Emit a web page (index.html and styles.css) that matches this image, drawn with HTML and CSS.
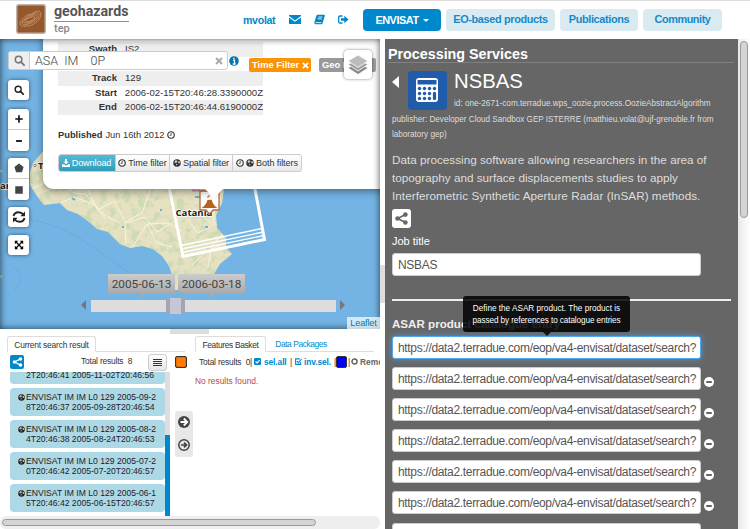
FILE: index.html
```html
<!DOCTYPE html>
<html lang="en">
<head>
<meta charset="utf-8">
<title>Geohazards TEP</title>
<link rel="stylesheet" href="styles.css">
</head>
<body>
<svg class="defs" aria-hidden="true">
  <symbol id="search" viewBox="0 0 12 12"><circle cx="5" cy="5" r="3.6" fill="none" stroke="currentColor" stroke-width="1.7"/><path d="M7.7 7.7L11 11" stroke="currentColor" stroke-width="2" stroke-linecap="round"/></symbol>
  <symbol id="clock" viewBox="0 0 12 12"><circle cx="6" cy="6" r="4.9" fill="none" stroke="currentColor" stroke-width="1.7"/><path d="M6.3 3v3.5H4" fill="none" stroke="currentColor" stroke-width="1.2"/></symbol>
  <symbol id="globe" viewBox="0 0 12 12"><circle cx="6" cy="6" r="5.6" fill="currentColor"/><path d="M3.600 2l2.300.3 1 1.500-1.500 1.300-2 1-1.200-1.300zM8 3.200l2 .2.800 2.200-1.300 1.200-1.700-.9zM4.800 7l1.800.6-.7 2.300-1.300-.8z" fill="#fff" opacity=".75"/></symbol>
  <symbol id="share" viewBox="0 0 12 12"><path d="M9.7 2.3L2.5 6l7.2 3.7" fill="none" stroke="currentColor" stroke-width="1.5"/><g fill="currentColor"><circle cx="9.6" cy="2.4" r="2.1"/><circle cx="2.3" cy="6" r="2.1"/><circle cx="9.6" cy="9.6" r="2.1"/></g></symbol>
  <symbol id="minus" viewBox="0 0 10 10"><circle cx="5" cy="5" r="5" fill="#fff"/><path d="M2.2 5h5.6" stroke="#555" stroke-width="1.8"/></symbol>
</svg>
<header class="top">
  <div class="brand">
    <svg class="logo" viewBox="0 0 29 29"><rect x=".7" y=".7" width="27.6" height="27.6" rx="2" fill="#95582c" stroke="#b9b4ae" stroke-width="1.4"/><g fill="none" stroke="#d6ae8e" stroke-width=".6"><path d="M4 18c-1 4 4 4 9 3s11-6 11-11-5-3-8-1-4 0-7 3-4 3-5 6z"/><path d="M6 18c0 3 4 2 7 1s9-4 9-8-4-2-6-1-5 1-6 3-4 3-4 5z"/><path d="M8 18c2 2 12-3 12-6s-4-1-6 0-8 4-6 6z"/><path d="M10 17c2 1 8-2 8-4s-3 0-4 0-5 2-4 4z"/></g></svg>
    <div class="brand-text"><b class="name">geohazards</b><span class="sub">tep</span></div>
  </div>
  <nav class="user">
    <a class="uname">mvolat</a>
    <svg class="ic mail" viewBox="0 0 12 9"><path d="M0 0h12v1L6 5.5 0 1zM0 2.5l6 4.3 6-4.3V9H0z"/></svg>
    <svg class="ic book" viewBox="0 0 11 11"><path d="M3.5.8h6.8q.7.2.5 1L8.7 9q-.3 1.2-1.3 1.2H1.5Q0 10 .3 8.6L2.4 1.8Q2.7.8 3.5.8z"/><path d="M4.3 3h4M3.7 4.800h4M1.600 8.600h5.800" stroke="#fff" stroke-width=".8"/></svg>
    <svg class="ic out" viewBox="0 0 11 9"><path d="M4.5 1H2Q.7 1 .7 2.300v4.400Q.7 8 2 8h2.500" fill="none" stroke="#08c" stroke-width="1.300"/><path d="M3 3.200h3.300V.8L10.500 4.500 6.300 8.200V5.800H3z"/></svg>
  </nav>
  <nav class="menu">
    <a class="pill on">ENVISAT <i class="caret"></i></a>
    <a class="pill eo">EO-based products</a>
    <a class="pill pub">Publications</a>
    <a class="pill com">Community</a>
  </nav>
</header>
<main class="main">
  <div class="left">
    <section class="map">
      <svg class="tiles" viewBox="0 39 380 290">
        <defs>
        <filter id="terrain" x="0" y="0" width="1" height="1"><feTurbulence type="fractalNoise" baseFrequency=".13" numOctaves="3" seed="8"/><feColorMatrix values="0 0 0 0 .62  0 0 0 0 .7  0 0 0 0 .46  0 5 0 0 -2.4"/></filter>
        <clipPath id="land"><path d="M44 150L33 163L30 172V185L37 196L44 205L60 203L67 210L78 214L88 221L97 229L108 232L120 244L130 248L142 246L153 249L162 256L169 266L173 278L175 290H213L214 274L220 264L226 259L232 254L226 248V238L217 228L216 215L222 203L224 190V150z"/></clipPath></defs>
        <rect y="39" width="380" height="290" fill="#73b4e5"/>
        <path d="M30 219q35 8 60 26t40 28M10 265q20 10 3 27" fill="none" stroke="#68a7da" stroke-width=".8"/>
        <g clip-path="url(#land)"><rect x="20" y="150" width="220" height="140" fill="#e5e1c1"/><rect x="20" y="150" width="220" height="140" filter="url(#terrain)"/>
        <g fill="none" stroke="#f8f3dc" stroke-width="1"><path d="M31 190l15-8 12-3 16 14 11 1 20 21 14 8M60 203l14-6 19 7 13 15M88 190l10 20 16-9 12 22 19-6 12 15 23-14M126 243l-1-21 17-9 8-23M132 248l15-24 10 19 15 4M148 224l20-1 14 8M195 210l20 16M188 220l10 13 13-7M216 201l-3 20 11 12-12 12-4 22M192 265l13-13 14-6"/></g>
        <path d="M72 198l3 2M122 227h2M160 210h2M205 227h3M195 197h5" stroke="#65aee5" stroke-width="2"/><path d="M192 190.500h8" stroke="#d98fb5" stroke-width="2"/></g>
        <path d="M0 170l2 2M0 277l2-1" stroke="#ddd6ad" stroke-width="2"/>
        <text class="place" x="0" y="189">ar</text><text class="place" x="38" y="168.5">T</text><circle cx="35" cy="165.500" r="1.200" fill="#fff" stroke="#555" stroke-width=".7"/>
        <text class="place" x="175.500" y="215.500">Catania</text>
        <g fill="none" stroke="#fff"><path d="M168.500 184l14.500 72.500 81.500-17L254 184" stroke-width="3"/><path d="M181 245.500l81-17M181.500 249l82-17M182 252.500l82-17" stroke-width="1.300"/></g>
        <path d="M200 191h19v19h-6l-3.500 4-3.500-4h-6z" fill="#fff" stroke="#b96e39" stroke-width="1.300"/><path d="M201.500 208q4-2 6-8l4-.3q2 6 6 8.300z" fill="#b9601f"/><path d="M208 198q-1-3 2-2" stroke="#b9601f" fill="none"/>
      </svg>
      <div class="popup">
        <dl class="rows">
          <div class="row shade"><dt>Swath</dt><dd>IS2</dd></div>
          <div class="row"><dt></dt><dd></dd></div>
          <div class="row shade"><dt>Track</dt><dd>129</dd></div>
          <div class="row"><dt>Start</dt><dd>2006-02-15T20:46:28.3390000Z</dd></div>
          <div class="row shade"><dt>End</dt><dd>2006-02-15T20:46:44.6190000Z</dd></div>
        </dl>
        <p class="published"><b>Published</b> Jun 16th 2012 <svg class="i8"><use href="#clock"/></svg></p>
        <div class="btns">
          <span class="btn dl"><svg class="i8" viewBox="0 0 12 12"><path d="M4.500 0h3v4H10L6 8 2 4h2.500zM0 8h3l3 2 3-2h3v4H0z" fill="#fff"/></svg>Download</span>
          <span class="btn tf"><svg class="i8"><use href="#clock"/></svg>Time filter</span>
          <span class="btn sf"><svg class="i8"><use href="#globe"/></svg>Spatial filter</span>
          <span class="btn bf"><svg class="i8"><use href="#clock"/></svg><svg class="i8"><use href="#globe"/></svg>Both filters</span>
        </div>
      </div>
      <i class="tip"></i>
      <i class="inner-shadow"></i>
      <div class="searchbar"><span class="sicon"><svg><use href="#search"/></svg></span><span class="query">ASA&nbsp; IM&nbsp;&nbsp; &nbsp;0P</span><svg class="clear" viewBox="0 0 8 8"><path d="M1 1l6 6M7 1L1 7" stroke="#aaa" stroke-width="2"/></svg></div>
      <svg class="info" viewBox="0 0 10 10"><circle cx="5" cy="5" r="4.800" fill="#0876ae"/><path d="M4 4.200h1.500V8M3.700 8h3M4.300 2.300h1.300" stroke="#fff" stroke-width="1.300" fill="none"/></svg>
      <span class="tag time">Time Filter <svg viewBox="0 0 8 8"><path d="M1 1l6 6M7 1L1 7" stroke="#fff" stroke-width="2.200"/></svg></span>
      <span class="tag geo">Geo Filter</span>
      <div class="layers"><svg viewBox="0 0 22 22"><g stroke="#fff" stroke-width=".8"><path d="M11 8l10 6-10 6.500L1 14z" fill="#888"/><path d="M11 5l10 5.500-10 6.500-10-6.500z" fill="#a0a0a0"/><path d="M11 1l10 6-10 6.500L1 7z" fill="#bcbcbc"/></g></svg></div>
      <div class="tools">
        <span class="tool"><svg><use href="#search"/></svg></span>
        <span class="tool pair"><i><svg viewBox="0 0 12 12"><path d="M6 1.500v9M1.500 6h9" stroke="#111" stroke-width="2"/></svg></i><i><svg viewBox="0 0 12 12"><path d="M2.500 6h7" stroke="#111" stroke-width="2.200"/></svg></i></span>
        <span class="tool pair shapes"><i><svg viewBox="0 0 12 12"><path d="M6 .5l5.500 4.300L9.500 11h-7L.5 4.800z" fill="#444"/></svg></i><i><svg viewBox="0 0 12 12"><path d="M1.500 1.500h9v9h-9z" fill="#444"/></svg></i></span>
        <span class="tool refresh"><svg viewBox="0 0 14 12"><path d="M1.500 5q1-3.800 5-3.800 3 0 4.800 2.300M12.500 7q-1 3.800-5 3.800-3 0-4.800-2.300" fill="none" stroke="#222" stroke-width="1.900"/><path d="M13 .5v4.700H8.300zM1 11.500V6.800h4.700z" fill="#222"/></svg></span>
        <span class="tool full"><svg viewBox="0 0 12 12"><path d="M2.500 2.500l7 7M9.500 2.500l-7 7" stroke="#111" stroke-width="1.600"/><path d="M1 1h4L1 5zM11 1v4L7 1zM1 11V7l4 4zM11 11H7l4-4z"/></svg></span>
      </div>
      <span class="date d1">2005-06-13</span><span class="date d2">2006-03-18</span>
      <div class="slider"><i class="range"></i></div><i class="arr l"></i><i class="arr r"></i>
      <span class="leaflet">Leaflet</span>
    </section>
    <div class="split-h"><i></i></div>
    <section class="bottom">
      <div class="results">
        <div class="tabs"><span class="tab active cur">Current search result</span></div>
        <div class="bar"><span class="share"><svg><use href="#share"/></svg></span><span class="total">Total results&nbsp; 8</span><span class="listbtn"><i></i><i></i><i></i><i></i></span></div>
        <div class="listwrap">
          <div class="list">
            <div class="item first"><p><br>2T20:46:41 2005-11-02T20:46:56</p></div>
            <div class="item"><svg class="g"><use href="#globe"/></svg><p>ENVISAT IM IM L0 129 2005-09-2<br>8T20:46:37 2005-09-28T20:46:54</p></div>
            <div class="item"><svg class="g"><use href="#globe"/></svg><p>ENVISAT IM IM L0 129 2005-08-2<br>4T20:46:38 2005-08-24T20:46:53</p></div>
            <div class="item"><svg class="g"><use href="#globe"/></svg><p>ENVISAT IM IM L0 129 2005-07-2<br>0T20:46:42 2005-07-20T20:46:57</p></div>
            <div class="item"><svg class="g"><use href="#globe"/></svg><p>ENVISAT IM IM L0 129 2005-06-1<br>5T20:46:42 2005-06-15T20:46:57</p></div>
          </div>
          <div class="vbar"><i></i></div>
        </div>
      </div>
      <div class="mid"><i class="sw orange"></i>
        <div class="movers"><svg viewBox="0 0 12 12"><circle cx="6" cy="6" r="6" fill="#444"/><path d="M2.500 6h6M5.800 2.500L9.300 6 5.800 9.500" stroke="#fff" stroke-width="1.800" fill="none"/></svg><svg viewBox="0 0 12 12"><circle cx="6" cy="6" r="5.200" fill="none" stroke="#444" stroke-width="1.500"/><path d="M3 6h5M6 3.600L8.500 6 6 8.400" stroke="#444" stroke-width="1.700" fill="none"/></svg></div>
      </div>
      <div class="basket">
        <div class="tabs"><span class="tab active fb">Features Basket</span><span class="tab dp">Data Packages</span></div>
        <div class="bline"><span class="t0">Total results&nbsp; 0|</span><svg class="chk" viewBox="0 0 8 8"><rect width="8" height="8" rx="1.500" fill="#08c"/><path d="M1.800 4l1.700 1.700L6.500 2.500" fill="none" stroke="#fff" stroke-width="1.300"/></svg><b class="sel">sel.all</b><span class="pipe">|</span><svg class="chk" viewBox="0 0 8 8"><path d="M6.500 4.500V7.300H.7V1h4.800M2 3.500l1.800 1.800L7.500 1.200" fill="none" stroke="#08c" stroke-width="1.200"/></svg><b class="inv">inv.sel.</b><span class="pipe p3">|</span><i class="sw blue"></i><span class="pipe p4">|</span><svg class="chk" viewBox="0 0 8 8"><circle cx="4" cy="4" r="2.900" fill="none" stroke="#666" stroke-width="1.700"/></svg><b class="rem">Remove</b></div>
        <p class="none">No results found.</p>
      </div>
      <div class="hscroll"><i></i></div>
    </section>
  </div>
  <div class="split-v"><i></i></div>
  <section class="panel">
    <h1>Processing Services</h1>
    <div class="svc">
      <i class="back"></i>
      <svg class="calc" viewBox="0 0 39 39"><rect width="39" height="39" rx="4" fill="#205caa"/><path d="M8 10q0-3 3-3h16q3 0 3 3v18q0 3-3 3H11q-3 0-3-3z" fill="#fff"/><path d="M9.500 9h19v4.500h-19z" fill="#205caa"/><g fill="#205caa"><circle cx="11.500" cy="17.500" r="1.700"/><circle cx="16.500" cy="17.500" r="1.700"/><circle cx="21.500" cy="17.500" r="1.700"/><circle cx="26.500" cy="17.500" r="1.700"/><circle cx="11.500" cy="22.500" r="1.700"/><circle cx="16.500" cy="22.500" r="1.700"/><circle cx="21.500" cy="22.500" r="1.700"/><circle cx="11.500" cy="27.500" r="1.700"/><circle cx="16.500" cy="27.500" r="1.700"/><circle cx="21.500" cy="27.500" r="1.700"/><rect x="24.900" y="20.800" width="3.200" height="8.400" rx="1.600"/></g></svg>
      <div class="svc-t"><h2>NSBAS</h2><p class="id">id: one-2671-com.terradue.wps_oozie.process.OozieAbstractAlgorithm</p></div>
    </div>
    <p class="pubr">publisher: Developer Cloud Sandbox GEP ISTERRE (matthieu.volat@ujf-grenoble.fr from<br><span>laboratory gep)</span></p>
    <p class="desc"><span>Data processing software allowing researchers in the area of</span><span>topography and surface displacements studies to apply</span><span class="l3">Interferometric Synthetic Aperture Radar (InSAR) methods.</span></p>
    <span class="share w"><svg><use href="#share"/></svg></span>
    <label class="job">Job title</label>
    <div class="input nsbas">NSBAS</div>
    <hr>
    <label class="asar">ASAR product catalogue entry</label>
    <div class="entries">
      <div class="entry"><div class="input focus">https://data2.terradue.com/eop/va4-envisat/dataset/search?</div></div>
      <div class="entry"><div class="input">https://data2.terradue.com/eop/va4-envisat/dataset/search?</div><svg><use href="#minus"/></svg></div>
      <div class="entry"><div class="input">https://data2.terradue.com/eop/va4-envisat/dataset/search?</div><svg><use href="#minus"/></svg></div>
      <div class="entry"><div class="input">https://data2.terradue.com/eop/va4-envisat/dataset/search?</div><svg><use href="#minus"/></svg></div>
      <div class="entry"><div class="input">https://data2.terradue.com/eop/va4-envisat/dataset/search?</div><svg><use href="#minus"/></svg></div>
      <div class="entry"><div class="input">https://data2.terradue.com/eop/va4-envisat/dataset/search?</div><svg><use href="#minus"/></svg></div>
      <div class="entry"><div class="input"></div></div>
    </div>
    <div class="tooltip"><span>Define the ASAR product. The product is</span><span class="tt2">passed by references to catalogue entries</span></div>
  </section>
  <div class="scroll"><i></i></div>
</main>
</body>
</html>
```
FILE: styles.css
```css
* { box-sizing: border-box; }
body { margin: 0; width: 750px; height: 529px; overflow: hidden; background: #fff; color: #333; font: 9.6px/14px "Liberation Sans", Arial, sans-serif; display: flex; flex-direction: column; }
p, h1, h2, dl, dd { margin: 0; }
i { font-style: normal; display: block; }
svg { display: block; flex: none; }
.defs { position: absolute; width: 0; height: 0; }

.top { height: 39px; flex: none; border-top: 1px solid #ddd; display: flex; align-items: flex-start; }
.brand { display: flex; width: 243px; padding: 3px 0 0 16px; gap: 8px; }
.logo { width: 30px; height: 30px; }
.brand-text { width: 75px; }
.name { display: block; height: 18px; border-bottom: 1px solid #b98260; font: bold 14.2px/14px Roboto, sans-serif; color: #555; white-space: nowrap; }
.sub { display: block; font: 500 11px/13px Roboto, sans-serif; color: #888; }
.user { display: flex; align-items: center; width: 120px; height: 37px; }
.uname { font-weight: bold; font-size: 10.6px; letter-spacing: -.3px; color: #08c; width: 46px; }
.ic { fill: #08c; }
.mail { width: 12px; height: 9px; margin-right: 13px; }
.book { width: 11px; height: 11px; margin-right: 13px; }
.out { width: 11px; height: 9px; }
.menu { display: flex; padding-top: 8px; gap: 5px; }
.pill { height: 22px; border-radius: 4px; background: #d9eaf1; color: #1789c9; font: bold 10.9px/21px "Liberation Sans", sans-serif; letter-spacing: -.35px; text-align: center; white-space: nowrap; }
.on { width: 78px; background: #08c; color: #fff; display: flex; align-items: center; justify-content: center; gap: 4px; letter-spacing: -.45px; }
.caret { border: 3px solid transparent; border-top-color: #fff; border-bottom: 0; }
.eo { width: 109px; } .pub { width: 78px; } .com { width: 79px; letter-spacing: -.45px; }

.main { flex: 1; display: flex; min-height: 0; }
.left { width: 380px; display: flex; flex-direction: column; }
.map { height: 290px; position: relative; overflow: hidden; flex: none; }
.tiles { width: 380px; height: 290px; }
.place { font: bold 9.6px "Open Sans", sans-serif; fill: #222; stroke: #fff; stroke-width: 1.5px; paint-order: stroke; }
.popup { position: absolute; left: 43px; top: -20px; width: 345px; height: 170px; padding: 23px 0 0 15px; background: #fff; border-radius: 0 0 0 11px; box-shadow: 0 2px 9px rgba(0,0,0,.45); }
.rows { width: 205px; }
.row { display: flex; height: 14.600px; line-height: 14.600px; }
.row:first-child { line-height: 13px; }
.shade { background: #eee; }
.row dt { width: 59px; text-align: right; font-weight: bold; }
.row dd { margin-left: 8px; white-space: nowrap; }
.published { display: flex; gap: 3px; align-items: center; margin-top: 13px; height: 14px; font-size: 9.300px; }
.i8 { width: 8px; height: 8px; }
.btns { display: flex; margin-top: 12px; height: 18px; width: 244px; border: 1px solid #ccc; border-radius: 3px; background: linear-gradient(#fff, #e8e8e8); overflow: hidden; }
.btn { display: flex; align-items: center; justify-content: center; gap: 2px; border-right: 1px solid #ccc; font-size: 9.100px; letter-spacing: -.1px; white-space: nowrap; }
.dl { width: 58px; margin: -1px 0 -1px -1px; background: linear-gradient(#55bcd8, #2f9ab9); color: #fff; }
.tf { width: 54px; } .sf { width: 63px; } .bf { flex: 1; border: 0; }
.tip { position: absolute; left: 204px; top: 149px; border: 10px solid transparent; border-top-color: #fff; border-bottom: 0; }
.searchbar { position: absolute; left: 8px; top: 12px; width: 220px; height: 19px; border: 1px solid #ccc; border-radius: 3px; background: #fff; display: flex; align-items: center; }
.sicon { width: 21px; height: 17px; background: #eee; border-right: 1px solid #ccc; color: #777; display: grid; place-items: center; }
.sicon svg { width: 11px; height: 11px; }
.query { flex: 1; padding-left: 5px; font: 300 12.500px/17px Roboto, sans-serif; color: #444; white-space: nowrap; }
.clear { width: 8px; height: 8px; margin-right: 4px; }
.info { position: absolute; left: 229px; top: 17px; width: 10px; height: 10px; }
.tag { position: absolute; top: 19px; height: 14px; border-radius: 2px; color: #fff; font-weight: bold; font-size: 9.400px; line-height: 14px; padding-left: 3px; white-space: nowrap; display: flex; align-items: center; gap: 3px; }
.tag svg { width: 7px; height: 7px; }
.time { left: 249px; width: 62px; background: #f89406; }
.geo { left: 319px; width: 57px; background: #999; }
.layers { position: absolute; left: 344px; top: 11px; width: 28px; height: 29px; border-radius: 4px; background: #fff; box-shadow: 0 0 3px rgba(0,0,0,.5); padding: 4px 3px; }
.layers svg { width: 22px; height: 22px; }
.tools { position: absolute; left: 8px; top: 41px; display: flex; flex-direction: column; gap: 8px; }
.tool { width: 21px; height: 20px; border-radius: 3px; background: #fff; color: #222; box-shadow: 0 0 4px rgba(0,0,0,.55); display: grid; place-items: center; }
.tool svg { width: 10px; height: 10px; }
.pair { height: 42px; grid-template-rows: 21px 21px; margin-top: 1px; }
.pair i { width: 100%; height: 21px; display: grid; place-items: center; }
.pair i:first-child { border-bottom: 1px solid #ccc; }
.shapes { margin-top: -1px; }
.refresh { margin-top: -1px; }
.refresh svg { width: 14px; height: 12px; }
.date { position: absolute; top: 235px; width: 67px; height: 19px; background: linear-gradient(#ccc, #aaa); color: #444; font: 11.800px/20px Roboto, sans-serif; text-align: center; }
.date::after { content: ""; position: absolute; left: 30px; top: 19px; border: 4px solid transparent; border-top-color: #aaa; border-bottom: 0; }
.d1 { left: 108px; } .d2 { left: 178px; }
.slider { position: absolute; left: 91px; top: 261px; width: 245px; height: 12px; background: #ddd; }
.range { width: 19px; height: 16px; margin: -2px 0 0 75px; background: #c6c7d6; border: solid #a5a5ae; border-width: 0 4px; }
.arr { position: absolute; top: 261px; border: 5px solid transparent; }
.l { left: 76px; border-right-color: #777; }
.r { left: 340px; border-left-color: #777; }
.leaflet { position: absolute; right: 0; bottom: 0; width: 33px; height: 12px; background: rgba(255,255,255,.7); color: #0078a8; font-size: 9px; line-height: 12px; text-align: center; letter-spacing: -.1px; }
.inner-shadow { position: absolute; inset: 0; box-shadow: inset 0 0 7px rgba(0,0,0,.7); }
.split-h { height: 5px; flex: none; }
.split-h i { width: 39px; height: 5px; background: #ddd; margin-left: 170px; }

.bottom { flex: 1; display: grid; grid-template: 182px 13px / 173px 22px 185px; font-size: 8.400px; }
.results { padding: 2px 0 0 7px; }
.tabs { display: flex; height: 16px; border-bottom: 1px solid #ddd; }
.results .tabs { width: 178px; }
.tab { height: 16px; line-height: 16px; text-align: center; white-space: nowrap; }
.active { border: 1px solid #ddd; border-bottom-color: #fff; border-radius: 3px 3px 0 0; }
.cur { width: 89px; letter-spacing: -.18px; } .fb { width: 71px; letter-spacing: -.33px; } .dp { width: 70px; color: #08c; letter-spacing: -.42px; }
.bar { display: flex; height: 20px; padding: 3px 0 0 3px; }
.share { flex: none; width: 14px; height: 14px; border-radius: 2px; background: #08c; color: #fff; display: grid; place-items: center; }
.share svg { width: 11px; height: 10px; }
.total { width: 124px; padding-left: 57px; white-space: nowrap; line-height: 12px; letter-spacing: -.18px; }
.listbtn { width: 19px; height: 17px; margin: -1px 0 0; border: 1px solid #ccc; border-radius: 3px; background: linear-gradient(#fff, #e6e6e6); padding: 4px 4px; display: grid; gap: 1px; }
.listbtn i { background: #333; height: 1px; }
.listwrap { display: flex; height: 144px; overflow: hidden; }
.list { width: 158px; padding-left: 3px; }
.item { height: 27.500px; margin-bottom: 4.500px; padding: 4px 0 0 8px; border-radius: 4px; background: #add8e6; display: flex; line-height: 10px; font-size: 8.600px; white-space: nowrap; width: 155px; color: #222; }
.item p { width: 128px; text-align: center; margin-left: 1px; }
.g { width: 7px; height: 7px; margin-top: 2px; }
.first { margin-top: -16px; } .first p { margin-left: 8px; }
.vbar { width: 5px; background: #ddd; }
.vbar i { margin-top: 63px; height: 81px; background: #08c; }
.mid { padding: 22px 0 0 2px; }
.sw { flex: none; width: 12px; height: 12px; border: 1px solid #333; border-radius: 2px; box-shadow: inset 0 0 1px #000; }
.orange { background: #ff7c00; }
.blue { width: 11px; background: #00f; }
.movers { width: 18px; height: 46px; margin-top: 43px; padding-bottom: 2px; background: #e8e8e8; border-radius: 3px; display: grid; justify-items: center; align-content: center; gap: 11px; }
.movers svg { width: 12px; height: 12px; }
.basket { padding-top: 2px; overflow: hidden; }
.basket .tabs { width: 179px; }
.bline { display: flex; height: 17px; margin-top: 1px; align-items: center; padding-left: 4px; white-space: nowrap; }
.bline > * { flex: none; }
.t0 { width: 55px; letter-spacing: -.18px; }
.chk { width: 7px; height: 7px; }
.sel, .inv { color: #08c; letter-spacing: -.1px; }
.sel { width: 26px; margin-left: 3px; } .inv { margin-left: 2px; width: 31px; }
.pipe { width: 5px; } .p3 { width: 2px; margin-left: -1px; } .p4 { width: 3px; margin-left: 1px; }
.rem { color: #666; margin-left: 2px; }
.none { color: #b94a48; margin-top: 5px; line-height: 12px; }
.hscroll { grid-column: 1 / 4; height: 13px; border-radius: 6px; background: #eee; padding: 3px 0 0 2px; }
.hscroll i { width: 314px; height: 7px; border: 1px solid #999; border-radius: 4px; background: #d4d4d4; }
.split-v { width: 5px; padding-top: 226px; background: #fff; }
.split-v i { height: 38px; background: #ddd; }

.panel { width: 353px; background: #666; color: #ddd; padding: 6px 3px 0 7px; position: relative; overflow: hidden; display: flex; flex-direction: column; align-items: flex-start; }
.panel > * { flex: none; }
h1 { margin-left: -4px; width: 346px; height: 18px; border-bottom: 1px solid #808080; font-size: 14.300px; line-height: 18px; color: #fff; }
.svc { display: flex; height: 48px; padding-top: 8px; }
.back { width: 0; border: solid transparent; border-width: 6px 7px 6px 0; border-right-color: #fff; height: 12px; margin: 5px 9px 0 0; }
.calc { width: 39px; height: 39px; }
.svc-t { margin-left: 7px; }
h2 { font: 20.300px/20px "Liberation Sans", sans-serif; color: #fff; height: 26px; }
.id { font-size: 8.200px; line-height: 14px; white-space: nowrap; }
.pubr { font-size: 8.150px; line-height: 15px; height: 30px; white-space: nowrap; margin-top: 1px; }
.desc { font-size: 11.730px; line-height: 17.900px; margin-top: 9px; }
.desc span { display: block; white-space: nowrap; }
.desc .l3 { letter-spacing: .04px; }
.w { width: 19px; height: 19px; background: #fff; color: #666; border-radius: 3px; margin-top: 4px; }
.w svg { width: 13px; height: 13px; }
.job { font-size: 11px; line-height: 14px; color: #fff; margin-top: 6px; }
.input { width: 309px; height: 23px; flex: none; background: #fff; border: 1px solid #ccc; border-radius: 3px; color: #555; font-size: 12px; letter-spacing: -.325px; line-height: 22px; padding-left: 5px; white-space: nowrap; overflow: hidden; }
.nsbas { margin-top: 5px; }
hr { width: 339px; height: 2px; border: 0; background: #eee; margin: 23px 0 0; }
.asar { font-weight: bold; font-size: 11.600px; line-height: 14px; margin-top: 16px; color: #eee; height: 19px; }
.entries { display: flex; flex-direction: column; gap: 8.150px; }
.entry { display: flex; align-items: center; height: 23px; flex: none; }
.entry svg { width: 10px; height: 10px; margin: 7px 0 0 3px; }
.focus { border-color: #52a8ec; box-shadow: 0 0 6px rgba(82,168,236,.7); }
.tooltip { position: absolute; left: 78px; top: 257px; width: 167px; height: 36px; border-radius: 3px; background: rgba(0,0,0,.85); color: #fff; font-size: 8.200px; line-height: 11.500px; text-align: center; padding-top: 7px; white-space: nowrap; }
.tooltip span { display: block; }
.tooltip .tt2 { letter-spacing: -.1px; }
.tooltip::after { content: ""; position: absolute; left: 80px; top: 36px; border: 4px solid transparent; border-top-color: #151515; border-bottom: 0; }
.scroll { width: 12px; background: linear-gradient(90deg, #e8e8e8, #fff); padding: 2px 0 0 2px; }
.scroll i { width: 8px; height: 177px; border: 1px solid #999; border-radius: 4px; background: #d4d4d4; }
```
